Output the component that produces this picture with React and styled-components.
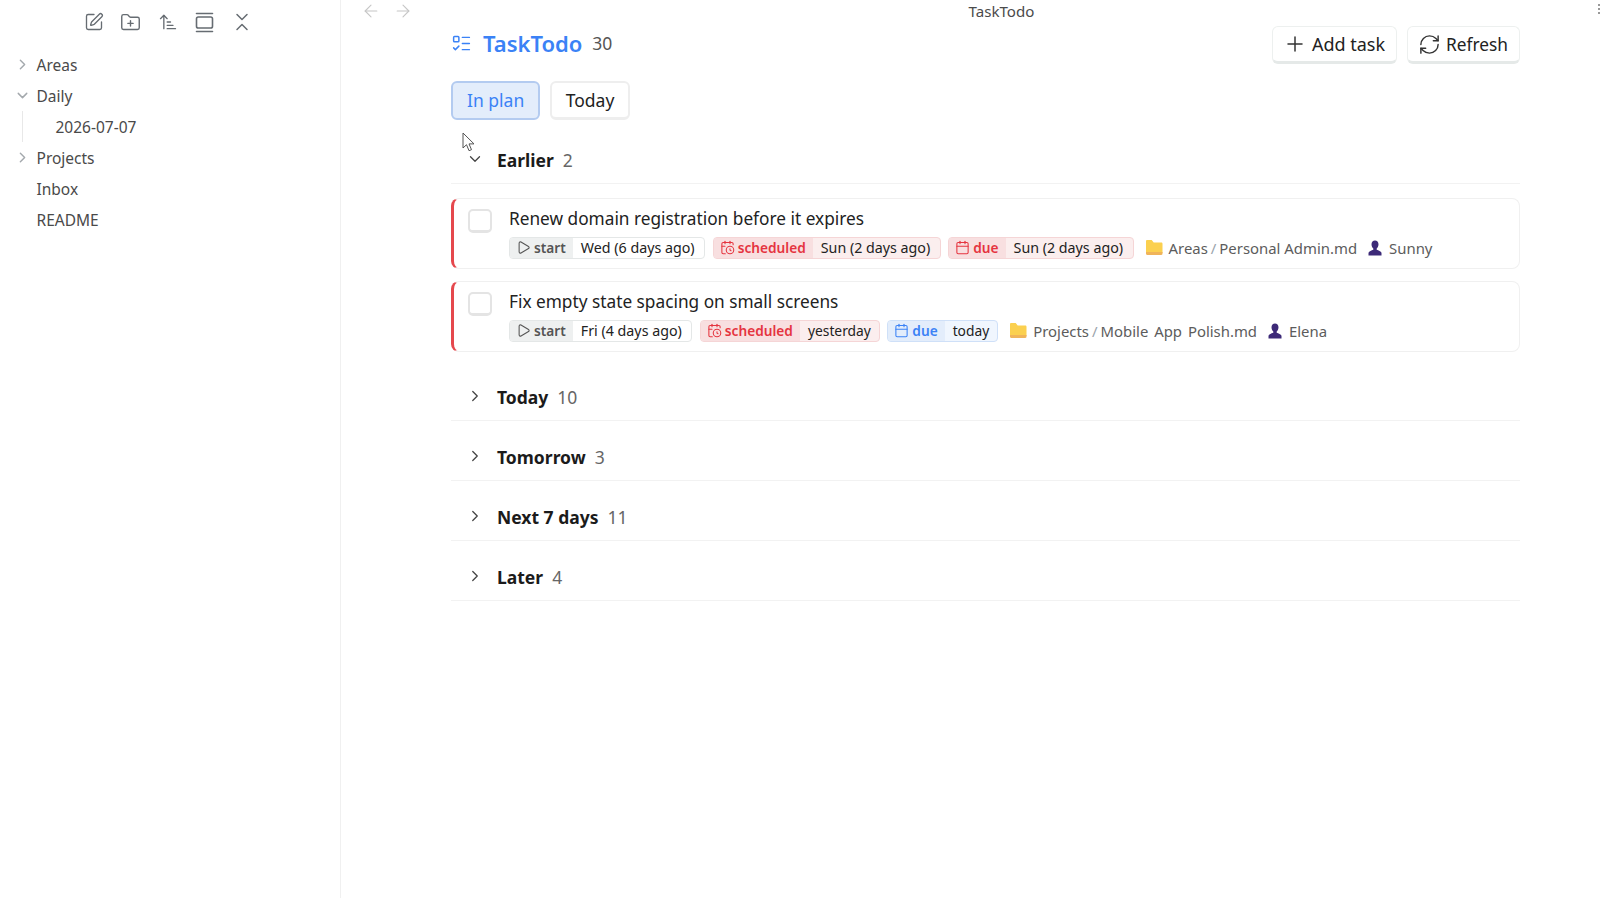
import React from 'react';
import styled, { createGlobalStyle } from 'styled-components';
import { ChevronRight, ChevronDown, SquarePen, FolderPlus, ArrowUpNarrowWide, ArrowLeft, ArrowRight, ListTodo, Plus, RefreshCw, Play, CalendarClock, Calendar } from 'lucide-react';

const Global = createGlobalStyle`
  html, body { margin: 0; padding: 0; height: 100%; background: #fff; }
  body { font-family: "Noto Sans", "Open Sans", sans-serif; color: #222; overflow: hidden; }
`;
const Page = styled.div`display: flex; width: 1600px; height: 898px; background: #fff; position: relative; overflow: hidden;`;
const Sidebar = styled.aside`width: 341px; flex: none; height: 898px; border-right: 1.5px solid #f0f0f0; box-sizing: border-box;`;
const SideTools = styled.div`display: flex; justify-content: center; align-items: center; gap: 14px; height: 44px; color: #666c72; padding-right: 5px;`;
const ToolIcon = styled.span`display: flex; width: 23px; height: 23px; align-items: center; justify-content: center;`;
const Tree = styled.nav`padding-top: 5px; display: flex; flex-direction: column;`;
const TreeRow = styled.div`
  height: 31px; display: flex; align-items: center; font-size: 15.5px; color: #4a4a4a;
  padding-left: ${p => p.$indent ? 55.5 : 36.5}px; position: relative;
`;
const Caret = styled.span`position: absolute; left: 14px; top: 7px; color: #a4a9ad; display: flex;`;
const Guide = styled.span`position: absolute; left: 22px; top: 0; bottom: 0; width: 1px; background: #e8e8e8;`;

const Main = styled.main`flex: 1; min-width: 0; display: flex; flex-direction: column;`;
const TopBar = styled.div`height: 22px; display: flex; align-items: center; position: relative; padding-left: 20px; gap: 12px; color: #c6c6c6;`;
const ViewTitle = styled.div`flex: 1; text-align: center; font-size: 15.1px; color: #4b4b4b; padding-right: 22px; padding-bottom: 1px;`;
const Dots = styled.span`position: absolute; right: 0; top: 4px; display: flex; flex-direction: column; gap: 2px;`;
const Dot = styled.i`width: 2px; height: 2px; background: #999; display: block;`;
const Content = styled.div`padding: 2px 80px 0 110px; display: flex; flex-direction: column;`;
const Head = styled.header`display: flex; align-items: center; height: 40px;`;
const HeadIcon = styled.span`color: #3b82f6; display: flex; margin: 0 11px 2px 0;`;
const Title = styled.h1`margin: 0 0 2px; font-size: 22px; font-weight: 600; color: #3b82f6; line-height: 1;`;
const Total = styled.span`font-size: 17.5px; color: #555; margin: 0 0 2px 10px;`;
const Actions = styled.div`margin: 2px 0 0 auto; display: flex; gap: 9.5px;`;
const Btn = styled.button`
  height: 38px; box-sizing: border-box; font: inherit; font-size: ${p => p.$size}px; color: #222; background: #fff;
  border: 1px solid #edf0ef; border-bottom: 3px solid #e5e9e8; border-radius: 6px; padding: 0 11px;
  display: flex; align-items: center; gap: 8px;
`;
const BtnIcon = styled.span`display: flex; color: #333; margin: 0 ${p => p.$right}px 0 ${p => p.$left}px;`;
const Tabs = styled.div`display: flex; gap: 9.5px; margin-top: 17px;`;
const Tab = styled.button`
  height: 39px; box-sizing: border-box; font: inherit; font-size: 17.5px; padding: 0 14px 1px; border-radius: 6px;
  color: ${p => p.$active ? '#3b82f6' : '#222'};
  background: ${p => p.$active ? '#e3edfb' : '#fff'};
  border: 2px solid ${p => p.$active ? '#b3cbf0' : '#eeeeee'};
  border-bottom-width: ${p => p.$active ? 2 : 3}px;
`;
const Group = styled.section``;
const GroupHead = styled.div`
  display: flex; align-items: flex-end; height: ${p => p.$h}px; box-sizing: border-box; border-bottom: 1px solid #f2f2f2;
  padding-left: 46px; padding-bottom: ${p => p.$pad}px; position: relative;
`;
const GroupCaret = styled.span`position: absolute; left: 15px; top: ${p => p.$top}px; color: #444; display: flex;`;
const GroupName = styled.span`font-weight: 700; color: #1b1b1b; font-size: 17.5px; line-height: 24px;`;
const GroupCount = styled.span`color: #666; margin-left: 9px; font-size: 17.5px; line-height: 24px;`;
const Cards = styled.div`display: flex; flex-direction: column; gap: 12.5px; padding-top: 14px; padding-bottom: 9.5px;`;
const Card = styled.article`
  height: 70.5px; box-sizing: border-box; border: 1px solid #f0f0f0; border-left: 3px solid #e5484d; border-radius: 8px;
  padding: 8px 0 0 14px; display: flex; gap: 17px;
`;
const Check = styled.span`width: 24px; height: 24px; box-sizing: border-box; flex: none; border: 2px solid #e4e4e4; border-bottom-width: 3px; border-radius: 5px; margin-top: 2px; background: #fff;`;
const CardBody = styled.div`display: flex; flex-direction: column; min-width: 0;`;
const CardTitle = styled.div`font-size: 17.25px; color: #222; line-height: 24px;`;
const Meta = styled.div`display: flex; align-items: center; gap: 7.5px; margin-top: 5.5px; white-space: nowrap;`;
const Chip = styled.span`
  display: inline-flex; height: 22px; box-sizing: border-box; border-radius: 4px; overflow: hidden;
  border: 1px solid ${p => ({ gray: '#e4e7e7', red: '#f5d5d6', blue: '#cfe0f8' }[p.$c])};
  background: ${p => ({ gray: '#fff', red: '#fbeeee', blue: '#f0f6fe' }[p.$c])};
`;
const ChipLabel = styled.span`
  display: inline-flex; align-items: center; gap: 3px; padding: 0 7px 0 6px; font-weight: 600; font-size: 13.7px;
  color: ${p => ({ gray: '#555', red: '#e5343f', blue: '#3b82f6' }[p.$c])};
  background: ${p => ({ gray: '#eef0f0', red: '#f8dfe0', blue: '#e3edfb' }[p.$c])};
`;
const ChipValue = styled.span`
  display: inline-flex; align-items: center; color: #222;
  padding: 0 ${p => p.$word ? 8 : 9.5}px 0 8px; font-size: ${p => p.$word ? 13.8 : 14.25}px;
`;
const Crumb = styled.span`display: inline-flex; align-items: center; gap: ${p => p.$gap}px; font-size: 14.9px; color: #5c5c5c; margin-left: 3.5px; word-spacing: ${p => p.$spread || 0}px;`;
const Sep = styled.span`color: #9aa3ab; margin: 0 3px;`;
const Cursor = styled.svg`position: absolute; left: 462px; top: 132px;`;

const CollapseIcon = () => (
  <svg width="18" height="18" viewBox="0 0 18 18" fill="none" stroke="currentColor" strokeWidth="1.5" strokeLinecap="round" strokeLinejoin="round">
    <path d="M4 1.500 9 6.500l5-5M4 16.500 9 11.500l5 5" />
  </svg>
);
const CardsIcon = () => (
  <svg width="19" height="21" viewBox="0 0 19 21" fill="none" stroke="currentColor" strokeWidth="1.6" strokeLinecap="round" strokeLinejoin="round">
    <path d="M1.500 1.500h16M1.500 19.500h16" />
    <rect x="1.500" y="5" width="16" height="11" rx="1.800" />
  </svg>
);
const FolderIcon = () => (
  <svg width="18" height="17" viewBox="0 0 18 17">
    <path d="M1 2.200C1 1.500 1.500 1 2.200 1h4.500l2 2.500h7.600c.7 0 1.200.5 1.200 1.200V14H1z" fill="#fbd04f" />
    <path d="M1 13h16.500v1.800c0 .7-.5 1.200-1.200 1.200H2.200C1.500 16 1 15.500 1 14.800z" fill="#f0b45a" />
  </svg>
);
const PersonIcon = () => (
  <svg width="14" height="16" viewBox="0 0 14 16">
    <path d="M7 .5c2.100 0 3.500 1.500 3.500 3.700 0 1.700-.8 3.400-1.800 4.200v1.300c1.700.7 4.300 1.300 4.800 3V15.500H.5v-2.800c.5-1.700 3.100-2.300 4.800-3V8.400c-1-.8-1.800-2.500-1.800-4.200C3.500 2 4.900.5 7 .5z" fill="#3d2a78" />
  </svg>
);

const TaskChip = ({ c, icon: Icon, label, value, word }) => (
  <Chip $c={c}>
    <ChipLabel $c={c}><Icon size={15} strokeWidth={1.7} />{label}</ChipLabel>
    <ChipValue $word={word}>{value}</ChipValue>
  </Chip>
);

const GROUPS = [['Today', 10], ['Tomorrow', 3], ['Next 7 days', 11], ['Later', 4]];

export default function App() {
  return (
    <Page>
      <Global />
      <Sidebar>
        <SideTools>
          <ToolIcon><SquarePen size={20} strokeWidth={1.6} /></ToolIcon>
          <ToolIcon><FolderPlus size={21} strokeWidth={1.6} /></ToolIcon>
          <ToolIcon><ArrowUpNarrowWide size={20} strokeWidth={1.6} /></ToolIcon>
          <ToolIcon><CardsIcon /></ToolIcon>
          <ToolIcon><CollapseIcon /></ToolIcon>
        </SideTools>
        <Tree>
          <TreeRow><Caret><ChevronRight size={17} /></Caret>Areas</TreeRow>
          <TreeRow><Caret><ChevronDown size={17} /></Caret>Daily</TreeRow>
          <TreeRow $indent><Guide />2026-07-07</TreeRow>
          <TreeRow><Caret><ChevronRight size={17} /></Caret>Projects</TreeRow>
          <TreeRow>Inbox</TreeRow>
          <TreeRow>README</TreeRow>
        </Tree>
      </Sidebar>
      <Main>
        <TopBar>
          <ArrowLeft size={20} strokeWidth={1.3} />
          <ArrowRight size={20} strokeWidth={1.3} />
          <ViewTitle>TaskTodo</ViewTitle>
          <Dots><Dot /><Dot /><Dot /></Dots>
        </TopBar>
        <Content>
          <Head>
            <HeadIcon><ListTodo size={21} strokeWidth={1.7} /></HeadIcon>
            <Title>TaskTodo</Title>
            <Total>30</Total>
            <Actions>
              <Btn $size={18}><BtnIcon $left={-1} $right={-3}><Plus size={24} strokeWidth={1.5} /></BtnIcon>Add task</Btn>
              <Btn $size={17.3}><BtnIcon $left={-0.5} $right={-3}><RefreshCw size={23} strokeWidth={1.5} /></BtnIcon>Refresh</Btn>
            </Actions>
          </Head>
          <Tabs>
            <Tab $active>In plan</Tab>
            <Tab>Today</Tab>
          </Tabs>
          <Group>
            <GroupHead $h={64} $pad={11}>
              <GroupCaret $top={30}><ChevronDown size={18} strokeWidth={1.7} /></GroupCaret>
              <GroupName>Earlier</GroupName><GroupCount>2</GroupCount>
            </GroupHead>
            <Cards>
              <Card>
                <Check />
                <CardBody>
                  <CardTitle>Renew domain registration before it expires</CardTitle>
                  <Meta>
                    <TaskChip c="gray" icon={Play} label="start" value="Wed (6 days ago)" />
                    <TaskChip c="red" icon={CalendarClock} label="scheduled" value="Sun (2 days ago)" />
                    <TaskChip c="red" icon={Calendar} label="due" value="Sun (2 days ago)" />
                    <Crumb $gap={6}><FolderIcon /><span>Areas<Sep>/</Sep>Personal Admin.md</span></Crumb>
                    <Crumb $gap={7}><PersonIcon />Sunny</Crumb>
                  </Meta>
                </CardBody>
              </Card>
              <Card>
                <Check />
                <CardBody>
                  <CardTitle>Fix empty state spacing on small screens</CardTitle>
                  <Meta>
                    <TaskChip c="gray" icon={Play} label="start" value="Fri (4 days ago)" />
                    <TaskChip c="red" icon={CalendarClock} label="scheduled" value="yesterday" word />
                    <TaskChip c="blue" icon={Calendar} label="due" value="today" word />
                    <Crumb $gap={6} $spread={2}><FolderIcon /><span>Projects<Sep>/</Sep>Mobile App Polish.md</span></Crumb>
                    <Crumb $gap={7}><PersonIcon />Elena</Crumb>
                  </Meta>
                </CardBody>
              </Card>
            </Cards>
          </Group>
          {GROUPS.map(([name, n]) => (
            <Group key={name}>
              <GroupHead $h={60} $pad={11}>
                <GroupCaret $top={26}><ChevronRight size={18} strokeWidth={1.7} /></GroupCaret>
                <GroupName>{name}</GroupName><GroupCount>{n}</GroupCount>
              </GroupHead>
            </Group>
          ))}
        </Content>
      </Main>
      <Cursor width="16" height="22" viewBox="0 0 16 22">
        <path d="M1 1v15l3.500-3.300 2.500 6 2.500-1-2.500-5.800h5z" fill="#fff" stroke="#555" strokeWidth="1" strokeLinejoin="round" />
      </Cursor>
    </Page>
  );
}
